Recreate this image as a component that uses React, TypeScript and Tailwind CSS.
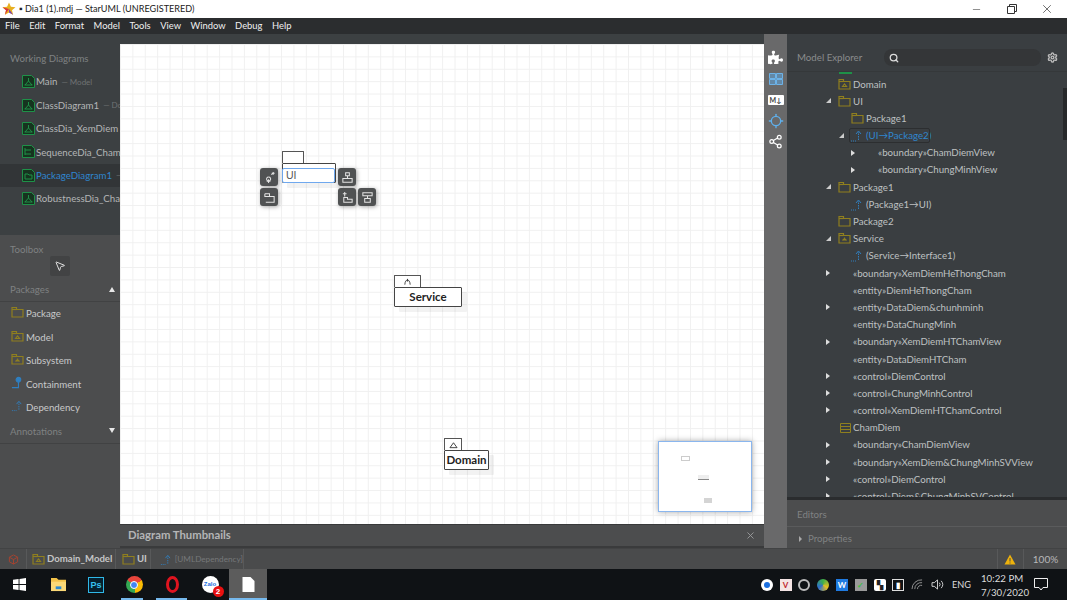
import React from 'react';
import { Minus, X, Search, Settings, MousePointer2, Share2, Locate } from 'lucide-react';
import { FaPuzzlePiece } from 'react-icons/fa';

const PackageIcon = ({ kind = 'package', className = '' }: { kind?: string; className?: string }) => (
  <svg viewBox="0 0 13 12" className={`w-[13px] h-[12px] ${className}`} fill="none" stroke="#8f7f1f" strokeWidth="1.2">
    <path d="M1 1.5h4.500v2H12v7.500H1z" />
    <path d="M1 3.500h4.500" />
    {kind === 'model' && <path d="M4.500 8.500l2-2.500 2 2.500z" />}
    {kind === 'subsystem' && <path d="M6.500 5.500v3M4.500 8.500l2-2 2 2" />}
  </svg>
);

const DependencyIcon = () => (
  <svg viewBox="0 0 14 13" className="w-[14px] h-[13px]" fill="none" stroke="#2f7fc0" strokeWidth="1">
    <path d="M1 12h6" strokeDasharray="1 1" />
    <path d="M8.500 11V3" strokeDasharray="1.500 1" />
    <path d="M6 5l2.500-3L11 5" />
  </svg>
);

const ContainmentIcon = () => (
  <svg viewBox="0 0 14 13" className="w-[14px] h-[13px]" fill="none" stroke="#2f7fc0" strokeWidth="1.2">
    <circle cx="8" cy="3.500" r="2.500" fill="#2f7fc0" />
    <path d="M8 6v6H1" />
  </svg>
);

const DiagramIcon = ({ seq = false, pkg = false }: { seq?: boolean; pkg?: boolean }) => (
  <svg viewBox="0 0 13 13" className="w-[13px] h-[13px] shrink-0" fill="none" stroke="#1e9148" strokeWidth="1">
    <path d="M.5.5h9l3 3v9H.5z" fill="#16341f" />
    {seq && <path d="M3 3v7M3 5h6M3 9h6" />}
    {pkg && <path d="M3 5h3l1 1h3v4H3z" />}
    {!seq && !pkg && <path d="M6.500 3v3M3 10l3.500-4 3.500 4M2.500 10h8" />}
  </svg>
);

const ShapeButton = ({ d }: { d: string }) => (
  <div className="w-[18px] h-[18px] rounded-[3px] bg-[#505253] shadow-[1px_1px_4px_rgba(0,0,0,0.35)] flex items-center justify-center">
    <svg viewBox="0 0 14 14" className="w-[13px] h-[13px]" fill="none" stroke="#e4e4e4" strokeWidth="1.1">
      <path d={d} />
    </svg>
  </div>
);

const UmlPackage = ({ tabW, name, glyph, bodyClass }: { tabW: string; name: string; glyph?: string; bodyClass: string }) => (
  <div className="flex flex-col items-start">
    <div className={`${tabW} h-[12px] bg-white border border-[#555] border-b-0 rounded-t-[1px] flex items-center justify-center`}>
      {glyph && (
        <svg viewBox="0 0 12 9" className="w-[11px] h-[8px]" fill="none" stroke="#333" strokeWidth="1">
          <path d={glyph} />
        </svg>
      )}
    </div>
    <div className={`${bodyClass} h-[20px] bg-white border border-[#444] rounded-[1px] shadow-[5px_5px_0_rgba(0,0,0,0.05)] flex items-center justify-center text-[11.5px] font-bold text-[#222]`}>
      {name}
    </div>
  </div>
);

const menus = ['File', 'Edit', 'Format', 'Model', 'Tools', 'View', 'Window', 'Debug', 'Help'];

const workingDiagrams = [
  { name: 'Main', sub: '— Model' },
  { name: 'ClassDiagram1', sub: '— Do' },
  { name: 'ClassDia_XemDiem', sub: '' },
  { name: 'SequenceDia_Cham', sub: '', seq: true },
  { name: 'PackageDiagram1', sub: '—', pkg: true, active: true },
  { name: 'RobustnessDia_Cha', sub: '' },
];

const toolItems = [
  { label: 'Package', icon: <PackageIcon /> },
  { label: 'Model', icon: <PackageIcon kind="model" /> },
  { label: 'Subsystem', icon: <PackageIcon kind="subsystem" /> },
  { label: 'Containment', icon: <ContainmentIcon /> },
  { label: 'Dependency', icon: <DependencyIcon /> },
];

type Row = { pl: string; text: string; arrow?: 'open' | 'closed'; icon?: 'package' | 'model' | 'subsystem' | 'dep' | 'class'; selected?: boolean };

const treeRows: Row[] = [
  { pl: 'pl-[36px]', text: 'Domain', icon: 'model' },
  { pl: 'pl-[36px]', text: 'UI', arrow: 'open', icon: 'package' },
  { pl: 'pl-[49px]', text: 'Package1', icon: 'package' },
  { pl: 'pl-[49px]', text: '(UI→Package2)', arrow: 'open', icon: 'dep', selected: true },
  { pl: 'pl-[61px]', text: '«boundary»ChamDiemView', arrow: 'closed' },
  { pl: 'pl-[61px]', text: '«boundary»ChungMinhView', arrow: 'closed' },
  { pl: 'pl-[36px]', text: 'Package1', arrow: 'open', icon: 'package' },
  { pl: 'pl-[49px]', text: '(Package1→UI)', icon: 'dep' },
  { pl: 'pl-[36px]', text: 'Package2', icon: 'package' },
  { pl: 'pl-[36px]', text: 'Service', arrow: 'open', icon: 'subsystem' },
  { pl: 'pl-[49px]', text: '(Service→Interface1)', icon: 'dep' },
  { pl: 'pl-[36px]', text: '«boundary»XemDiemHeThongCham', arrow: 'closed' },
  { pl: 'pl-[36px]', text: '«entity»DiemHeThongCham' },
  { pl: 'pl-[36px]', text: '«entity»DataDiem&chunhminh', arrow: 'closed' },
  { pl: 'pl-[36px]', text: '«entity»DataChungMinh' },
  { pl: 'pl-[36px]', text: '«boundary»XemDiemHTChamView', arrow: 'closed' },
  { pl: 'pl-[36px]', text: '«entity»DataDiemHTCham' },
  { pl: 'pl-[36px]', text: '«control»DiemControl', arrow: 'closed' },
  { pl: 'pl-[36px]', text: '«control»ChungMinhControl', arrow: 'closed' },
  { pl: 'pl-[36px]', text: '«control»XemDiemHTChamControl', arrow: 'closed' },
  { pl: 'pl-[36px]', text: 'ChamDiem', icon: 'class' },
  { pl: 'pl-[36px]', text: '«boundary»ChamDiemView', arrow: 'closed' },
  { pl: 'pl-[36px]', text: '«boundary»XemDiem&ChungMinhSVView', arrow: 'closed' },
  { pl: 'pl-[36px]', text: '«control»DiemControl', arrow: 'closed' },
  { pl: 'pl-[36px]', text: '«control»Diem&ChungMinhSVControl', arrow: 'closed' },
];

const TreeIcon = ({ icon }: { icon: Row['icon'] }) => {
  if (icon === 'dep') return <DependencyIcon />;
  if (icon === 'class')
    return (
      <svg viewBox="0 0 11 10" className="w-[11px] h-[10px]" fill="none" stroke="#8f7f1f">
        <path d="M.5.5h10v9H.5zM.5 3.500h10M.5 6.500h10" />
      </svg>
    );
  return <PackageIcon kind={icon} className="w-[12px] h-[11px]" />;
};

const TreeRow = ({ row }: { row: Row }) => (
  <div className={`h-[17.2px] flex items-center whitespace-nowrap ${row.pl}`}>
    <div className="w-[10px] flex justify-center shrink-0">
      {row.arrow === 'closed' && <div className="w-0 h-0 border-y-[3.5px] border-y-transparent border-l-[4px] border-l-[#ddd]" />}
      {row.arrow === 'open' && <div className="w-0 h-0 border-b-[5px] border-b-[#ccc] border-l-[5px] border-l-transparent" />}
    </div>
    <div className="w-[20px] shrink-0 flex justify-end pr-[2px]">{row.icon && <TreeIcon icon={row.icon} />}</div>
    <span className={row.selected ? 'text-[#2f86cf]' : 'text-[#bfc1c2]'}>{row.text}</span>
  </div>
);

const StatusCell = ({ children, className = '' }: { children: React.ReactNode; className?: string }) => (
  <div className={`h-full flex items-center gap-[2px] border-r border-[#58595a] ${className}`}>{children}</div>
);

const TaskIcon = ({ children, width = 'w-[38px]', underline = '', active = false }: { children: React.ReactNode; width?: string; underline?: string; active?: boolean }) => (
  <div className={`relative ${width} h-full flex items-center justify-center ${active ? 'bg-[#5c5c5c]' : ''}`}>
    {children}
    {underline && <div className={`absolute bottom-0 h-[2px] bg-[#76b9ed] ${underline}`} />}
  </div>
);

const TrayBox = ({ className, children }: { className: string; children?: React.ReactNode }) => (
  <div className={`w-[12px] h-[12px] flex items-center justify-center text-[8px] font-bold ${className}`}>{children}</div>
);

export default function App() {
  return (
    <div className="w-[1067px] h-[600px] overflow-hidden flex flex-col bg-[#3a3e41] font-['Lato',sans-serif] text-[9.7px]">
      {/* Title bar */}
      <div className="h-[18px] bg-white flex items-center pl-[2px] shrink-0">
        <svg viewBox="0 0 14 14" className="w-[14px] h-[14px] shrink-0">
          <path d="M7 .5l1.900 4.300 4.600.4-3.500 3 1.100 4.600L7 10.400l-4.100 2.400L4 8.200.5 5.200l4.600-.4z" fill="#e8b020" />
          <path d="M2.900 12.800L4 8.200.5 5.200 7 7z" fill="#d8343f" />
          <path d="M7 7l4.100 5.800L7 10.400z" fill="#7a3fb0" />
        </svg>
        <span className="ml-[3px] text-[9.1px] text-[#222] whitespace-nowrap">▪ Dia1 (1).mdj — StarUML (UNREGISTERED)</span>
        <div className="ml-auto flex items-center text-[#333]">
          <div className="w-[35px] flex justify-center"><Minus size={11} strokeWidth={1.2} /></div>
          <div className="w-[35px] flex justify-center">
            <svg viewBox="0 0 10 10" className="w-[10px] h-[10px]" fill="none" stroke="#333" strokeWidth="1">
              <path d="M.5 2.500h7v7h-7zM2.500 2.500v-2h7v7h-2" />
            </svg>
          </div>
          <div className="w-[35px] flex justify-center mr-[3px]"><X size={14} strokeWidth={1.2} /></div>
        </div>
      </div>

      {/* Menu bar */}
      <div className="h-[16px] bg-[#2b2d2f] flex items-center pl-[5px] gap-[9.5px] text-[9.4px] text-[#f0f0f0] shrink-0">
        {menus.map((m) => (
          <span key={m}>{m}</span>
        ))}
      </div>

      {/* Main area */}
      <div className="h-[514px] flex shrink-0">
        {/* Left sidebar */}
        <div className="w-[120px] flex flex-col shrink-0 overflow-hidden">
          <div className="h-[201px] bg-[#3c4042] shrink-0 pt-[18px]">
            <div className="pl-[10px] h-[12px] leading-[12px] text-[#7f8283] whitespace-nowrap">Working Diagrams</div>
            <div className="mt-[6px]">
              {workingDiagrams.map((d) => (
                <div key={d.name} className={`h-[23.4px] pl-[22px] flex items-center gap-[1px] whitespace-nowrap ${d.active ? 'bg-[#323537]' : ''}`}>
                  <DiagramIcon seq={d.seq} pkg={d.pkg} />
                  <span className={d.active ? 'text-[#2f86cf]' : 'text-[#b4b6b7]'}>{d.name}</span>
                  {d.sub && <span className="ml-[3px] text-[8px] text-[#6f7273]">{d.sub}</span>}
                </div>
              ))}
            </div>
          </div>
          <div className="flex-1 bg-[#4c4d4e]">
            <div className="pl-[10px] pt-[7px] h-[21px] text-[#7f8182]">Toolbox</div>
            <div className="ml-[50px] w-[20px] h-[20px] bg-[#424344] rounded-[2px] flex items-center justify-center">
              <MousePointer2 size={12} className="text-[#ddd]" />
            </div>
            <div className="mt-[5px] h-[21px] pb-[3px] pl-[10px] pr-[5px] flex items-center justify-between text-[#7f8182] border-b border-[#414243]">
              <span>Packages</span>
              <div className="w-0 h-0 border-x-[3px] border-x-transparent border-b-[5px] border-b-[#e8e8e8]" />
            </div>
            {toolItems.map((t) => (
              <div key={t.label} className="h-[23.4px] pl-[11px] flex items-center gap-[2px] text-[#c8c9ca]">
                <div className="w-[13px] flex justify-center -mt-[3px]">{t.icon}</div>
                <span>{t.label}</span>
              </div>
            ))}
            <div className="h-[25px] pl-[10px] pr-[5px] flex items-center justify-between text-[#7f8182] border-b border-[#414243]">
              <span>Annotations</span>
              <div className="w-0 h-0 border-x-[3px] border-x-transparent border-t-[5px] border-t-[#e8e8e8]" />
            </div>
          </div>
        </div>

        {/* Canvas column */}
        <div className="w-[644px] flex flex-col shrink-0 bg-[#3c4042]">
          <div className="h-[10px] shrink-0" />
          <div className="relative h-[480px] shrink-0 overflow-hidden bg-white bg-[linear-gradient(#f0f0f0_1px,transparent_1px),linear-gradient(90deg,#f0f0f0_1px,transparent_1px)] bg-[size:12.4px_12.4px]">
            {/* UI package with quick edit */}
            <div className="absolute left-[162px] top-[107px]">
              <UmlPackage tabW="w-[22px]" name="" bodyClass="w-[54px]" />
            </div>
            <input
              readOnly
              value="UI"
              className="absolute left-[162px] top-[124px] w-[53px] h-[15px] px-[3px] bg-white border-[1.5px] border-[#6fa8ee] rounded-[2px] text-[10.5px] text-[#555] outline-none font-['Liberation_Sans',sans-serif]"
            />
            <div className="absolute left-[140px] top-[124px] flex flex-col gap-[2px]">
              <ShapeButton d="M6 6.500a2.200 2.200 0 1 0 .1 0M6 9v4M4 11h4M9 4l2-2M11 1v3M9.500 2.500h3" />
              <ShapeButton d="M2 3h5v3h5v6H3M2 3v3h5" />
            </div>
            <div className="absolute left-[218px] top-[124px]">
              <ShapeButton d="M5 2h4v3H5zM7 5v3M2 8h10v4H2z" />
            </div>
            <div className="absolute left-[218px] top-[144px] flex gap-[2px]">
              <ShapeButton d="M4 1v5M2 3h4M3 7h4v2h5v3H3z" />
              <ShapeButton d="M2 2h10v3H2zM7 5v3M4 8h6v4H4z" />
            </div>

            <div className="absolute left-[274px] top-[231px]">
              <UmlPackage tabW="w-[27px]" name="Service" glyph="M3 7.500C3 4 5 2 6 2s3 2 3 5.500M6 1v3" bodyClass="w-[68px]" />
            </div>
            <div className="absolute left-[324px] top-[394px]">
              <UmlPackage tabW="w-[18px]" name="Domain" glyph="M2 7.500L6 2l4 5.500z" bodyClass="w-[45px]" />
            </div>

            {/* Minimap */}
            <div className="absolute left-[538px] top-[397px] w-[94px] h-[71px] bg-white border border-[#8ab6ee] shadow-[0_0_6px_rgba(0,0,0,0.35)]">
              <div className="absolute left-[22px] top-[14px] w-[9px] h-[5px] border border-[#ccc]" />
              <div className="absolute left-[39px] top-[33px] w-[11px] h-[5px] border-b border-[#888] bg-[#eee]" />
              <div className="absolute left-[45px] top-[56px] w-[8px] h-[5px] bg-[#d4d4d4]" />
            </div>
          </div>
          <div className="h-[22px] shrink-0 bg-[#4c4d4e] border-t border-[#38393a] flex items-center justify-between pl-[8px] pr-[8px]">
            <span className="text-[11.3px] font-bold text-[#b4b5b6]">Diagram Thumbnails</span>
            <X size={11} className="text-[#9a9b9c]" />
          </div>
          <div className="h-[2px] bg-[#3a3b3c]" />
        </div>

        {/* Right toolbar */}
        <div className="w-[23px] bg-[#69696a] flex flex-col items-center pt-[13px] shrink-0">
          <div className="h-[21px] flex items-center justify-center">
            <FaPuzzlePiece size={15} className="text-white" />
          </div>
          <div className="h-[21px] flex items-center justify-center">
            <svg viewBox="0 0 14 12" className="w-[14px] h-[12px]" fill="none" stroke="#6cb2e8" strokeWidth="1">
              <path d="M.5.5h6v5h-6zM7.500.5h6v5h-6zM.5 6.500h6v5h-6zM7.500 6.500h6v5h-6z" fill="#5f9dcf" fillOpacity="0.6" />
            </svg>
          </div>
          <div className="h-[21px] flex items-center justify-center">
            <div className="w-[16px] h-[10px] bg-white rounded-[1px] text-[#444] text-[7px] leading-[10px] font-bold text-center">M↓</div>
          </div>
          <div className="h-[21px] flex items-center justify-center">
            <Locate size={16} strokeWidth={2} className="text-[#5fb0ec]" />
          </div>
          <div className="h-[21px] flex items-center justify-center">
            <Share2 size={15} className="text-white" />
          </div>
        </div>

        {/* Right panel */}
        <div className="flex-1 flex flex-col bg-[#3a3e41]">
          <div className="h-[38px] shrink-0 flex items-center pt-[10px] pl-[10px] border-b border-[#35383a] relative z-10 bg-[#3a3e41]">
            <span className="text-[#8a8c8d] w-[87px] whitespace-nowrap">Model Explorer</span>
            <div className="w-[157px] h-[17px] bg-[#343638] rounded-[8px] flex items-center pl-[5px]">
              <Search size={10} strokeWidth={3} className="text-[#ddd]" />
            </div>
            <Settings size={11} strokeWidth={3} className="ml-[6px] text-[#bbb]" />
          </div>
          <div className="relative h-[425px] shrink-0 overflow-hidden">
            {/* sliver of the row scrolled out above Domain */}
            <div className="absolute left-[52px] top-0 w-[13px] h-[1.5px] bg-[#1e9148]" />
            <div className="mt-[3.2px]">
              {treeRows.map((r, i) => (
                <TreeRow key={i} row={r} />
              ))}
            </div>
            {/* selected outline */}
            <div className="absolute left-[62px] top-[56px] w-[81px] h-[15px] rounded-[2px] border border-[#2c2e30]" />
            {/* scrollbar thumb */}
            <div className="absolute right-0 top-[16px] w-[4px] h-[52px] bg-[#26282a]" />
          </div>
          <div className="h-[3px] shrink-0 bg-[#2a2c2e]" />
          <div className="h-[27px] shrink-0 bg-[#4c4d4e] pl-[10px] pt-[3px] flex items-center text-[#808283] border-b border-[#5a5b5c]">Editors</div>
          <div className="flex-1 bg-[#4c4d4e] pl-[12px] pt-[2px] flex items-center gap-[6px] text-[#808283]">
            <div className="w-0 h-0 border-y-[3px] border-y-transparent border-l-[3.5px] border-l-[#aaa]" />
            <span>Properties</span>
          </div>
        </div>
      </div>

      {/* Status bar */}
      <div className="h-[21px] shrink-0 bg-[#4a4b4c] flex items-center border-t border-[#424344] text-[9.6px] font-bold text-[#c4c5c6]">
        <StatusCell className="w-[27px] justify-center">
          <svg viewBox="0 0 12 12" className="w-[11px] h-[11px]" fill="none" stroke="#a8432f" strokeWidth="1">
            <path d="M6 1l4.500 2.500v5L6 11 1.500 8.500v-5zM1.500 3.500L6 6l4.500-2.500M6 6v5" />
          </svg>
        </StatusCell>
        <StatusCell className="w-[89px] pl-[5px]">
          <PackageIcon kind="model" className="shrink-0" />
          <span>Domain_Model</span>
        </StatusCell>
        <StatusCell className="w-[35px] pl-[6px]">
          <PackageIcon className="shrink-0" />
          <span>UI</span>
        </StatusCell>
        <StatusCell className="w-[93px] pl-[9px]">
          <DependencyIcon />
          <span className="text-[8.2px] font-normal text-[#76787a]">[UMLDependency]</span>
        </StatusCell>
        <div className="ml-auto h-full flex items-center border-l border-[#58595a] pl-[6px] pr-[7px]">
          <svg viewBox="0 0 12 11" className="w-[12px] h-[11px]">
            <path d="M6 .5L11.500 10.500H.5z" fill="#eeb20c" />
            <path d="M6 4v3.500M6 8.500v1" stroke="#4a4b4c" strokeWidth="1" />
          </svg>
        </div>
        <div className="w-[44px] h-full flex items-center justify-center border-l border-[#58595a] font-normal text-[10px] text-[#b8b9ba]">100%</div>
      </div>

      {/* Windows taskbar */}
      <div className="flex-1 bg-[#0f1215] flex items-stretch">
        <div className="w-[39px] flex items-center justify-center">
          <svg viewBox="0 0 14 14" className="w-[13px] h-[13px]" fill="#fff">
            <path d="M0 2l6-.9V6.500H0zM7 1l7-1v6.500H7zM0 7.500h6v5.400l-6-.9zM7 7.500h7V14l-7-1z" />
          </svg>
        </div>
        <TaskIcon>
          <svg viewBox="0 0 18 16" className="w-[17px] h-[15px]">
            <path d="M1 1h6l2 2h8v12H1z" fill="#f3c34a" />
            <path d="M1 5h16v10H1z" fill="#fbd977" />
            <path d="M6 10h6v3H6z" fill="#2b8ad0" />
          </svg>
        </TaskIcon>
        <TaskIcon>
          <div className="w-[16px] h-[16px] border border-[#2fb8e8] bg-[#06202e] text-[#36c0f0] text-[9px] leading-[14px] text-center font-bold font-['Liberation_Sans',sans-serif]">Ps</div>
        </TaskIcon>
        <TaskIcon underline="left-[6px] w-[22px]">
          <div className="w-[17px] h-[17px] rounded-full bg-[conic-gradient(from_-60deg,#e8453c_0_33.3%,#fbbc05_33.3%_66.6%,#34a853_66.6%_100%)] flex items-center justify-center">
            <div className="w-[8px] h-[8px] rounded-full bg-[#4285f4] border border-white" />
          </div>
        </TaskIcon>
        <TaskIcon underline="left-[3px] w-[31px]">
          <div className="w-[13px] h-[17px] rounded-[50%] border-[3px] border-[#e0141f]" />
        </TaskIcon>
        <TaskIcon>
          <div className="relative w-[17px] h-[17px] rounded-full bg-white flex items-center justify-center text-[6px] font-bold text-[#1a6fe0] font-['Liberation_Sans',sans-serif]">
            Zalo
            <div className="absolute -right-[5px] -bottom-[4px] w-[11px] h-[11px] rounded-full bg-[#e81010] text-white text-[8px] leading-[11px] text-center">2</div>
          </div>
        </TaskIcon>
        <TaskIcon active width="w-[38px]" underline="left-0 w-full">
          <svg viewBox="0 0 12 15" className="w-[13px] h-[15px]">
            <path d="M0 0h8l4 4v11H0z" fill="#fff" />
          </svg>
        </TaskIcon>

        {/* Tray */}
        <div className="ml-auto flex items-center text-[#dcdcdc]">
          <div className="flex items-center gap-[6.8px]">
            <div className="w-[12px] h-[12px] rounded-full bg-white flex items-center justify-center"><div className="w-[6px] h-[6px] rounded-full bg-[#1a6fe0]" /></div>
            <TrayBox className="bg-[#f4e4e4] text-[#c0262c]">V</TrayBox>
            <TrayBox className="rounded-full border-2 border-[#bbb]" />
            <TrayBox className="rounded-full bg-[conic-gradient(#3bb04a,#e8c020,#2f6fd0,#3bb04a)]" />
            <TrayBox className="bg-[#1f7ae0] text-white">W</TrayBox>
            <TrayBox className="bg-[#9a9a9a] text-[#36c040]">✓</TrayBox>
            <TrayBox className="bg-white rounded-[2px] text-[#222]">▚</TrayBox>
            <TrayBox className="border border-[#ddd] text-white text-[6px]">▮</TrayBox>
            <svg viewBox="0 0 14 12" className="w-[13px] h-[11px]" fill="none" stroke="#9a9a9a" strokeWidth="1">
              <path d="M1 11A10 10 0 0 1 12 1M4 11a7 7 0 0 1 8-7M7 11a4 4 0 0 1 5-4" />
            </svg>
            <svg viewBox="0 0 14 12" className="w-[13px] h-[11px]" fill="none" stroke="#ddd" strokeWidth="1">
              <path d="M1 4h2.500L7 1v10L3.500 8H1zM9 4a3 3 0 0 1 0 4M11 2a6 6 0 0 1 0 8" />
            </svg>
          </div>
          <span className="ml-[8px] w-[18px] text-[9.2px] whitespace-nowrap">ENG</span>
          <div className="ml-[11px] w-[42px] text-center text-[9.7px] leading-[14px] whitespace-nowrap">
            <div>10:22 PM</div>
            <div>7/30/2020</div>
          </div>
          <div className="w-[36px] mr-[8px] flex justify-center">
            <svg viewBox="0 0 14 13" className="w-[14px] h-[13px]" fill="none" stroke="#eee" strokeWidth="1">
              <path d="M.5.500h13v9H9L7 12 5 9.500H.5z" />
            </svg>
          </div>
        </div>
      </div>
    </div>
  );
}
